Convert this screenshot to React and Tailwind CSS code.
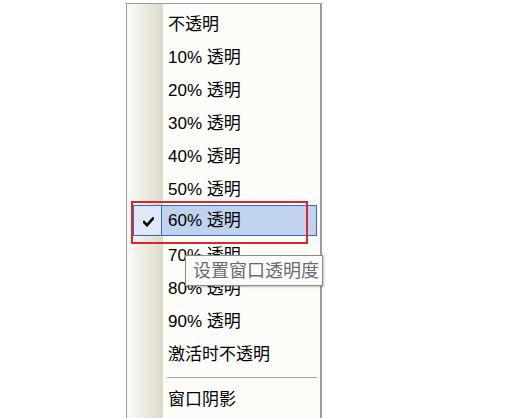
import React from "react";

const items = ["不透明", "10% 透明", "20% 透明", "30% 透明", "40% 透明", "50% 透明", "60% 透明", "70% 透明", "80% 透明", "90% 透明", "激活时不透明"];

function Check() {
  return (
    <svg width="11" height="10" viewBox="0 0 11 10">
      <path d="M1 5.2 L4 8.2 L10 1.5" fill="none" stroke="#000" strokeWidth="2.6" strokeLinecap="square" strokeLinejoin="miter" />
    </svg>
  );
}

export default function App() {
  return (
    <div
      className="w-[510px] h-[418px] bg-white relative overflow-hidden text-black"
      style={{ fontFamily: '"Liberation Sans", "Noto Sans CJK SC", sans-serif' }}
    >
      <div className="ml-[126px] mt-[3px] w-[196px] h-[430px] border-l border-t border-r-2 border-[#9c9c9c] bg-[#fcfcf9] bg-[linear-gradient(to_right,#fbfbf6,#dcdac9)] bg-no-repeat bg-[length:36px_100%] pt-[4px] pl-[6px] pr-[3px] flex flex-col">
        {items.map((t, i) =>
          i === 6 ? (
            <div key={t} className="h-[33px]">
              <div className="h-[31px] -mt-[1px] border border-[#316ac5] bg-[#c1d2ee] flex items-center">
                <div className="w-[28px] h-full bg-[#e0e8f7] border-r border-[#316ac5] flex items-center justify-center pl-[1px] pt-[2px]">
                  <Check />
                </div>
                <span className="ml-[6px] text-[17px] leading-none">{t}</span>
              </div>
            </div>
          ) : (
            <div key={t} className="h-[33px] flex items-center pl-[35px] text-[17px] leading-none">
              {t}
            </div>
          )
        )}
        <div className="h-[12px] flex items-center pl-[34px]">
          <div className="w-full h-px bg-[#a6a6a6]" />
        </div>
        <div className="h-[33px] flex items-center pl-[35px] text-[17px] leading-none">窗口阴影</div>
      </div>

      <div className="absolute left-[131px] top-[201px] w-[177px] h-[43px] border-2 border-[#e0242b]" />

      <div className="absolute left-[185px] top-[255px] w-[138px] h-[31px] border border-[#8a8a8a] bg-[#fbfbfb] shadow-[1px_1px_2px_rgba(0,0,0,0.25)] flex items-center pl-[7px] text-[18px] leading-none text-[#6a6a6a]">
        设置窗口透明度
      </div>
    </div>
  );
}
